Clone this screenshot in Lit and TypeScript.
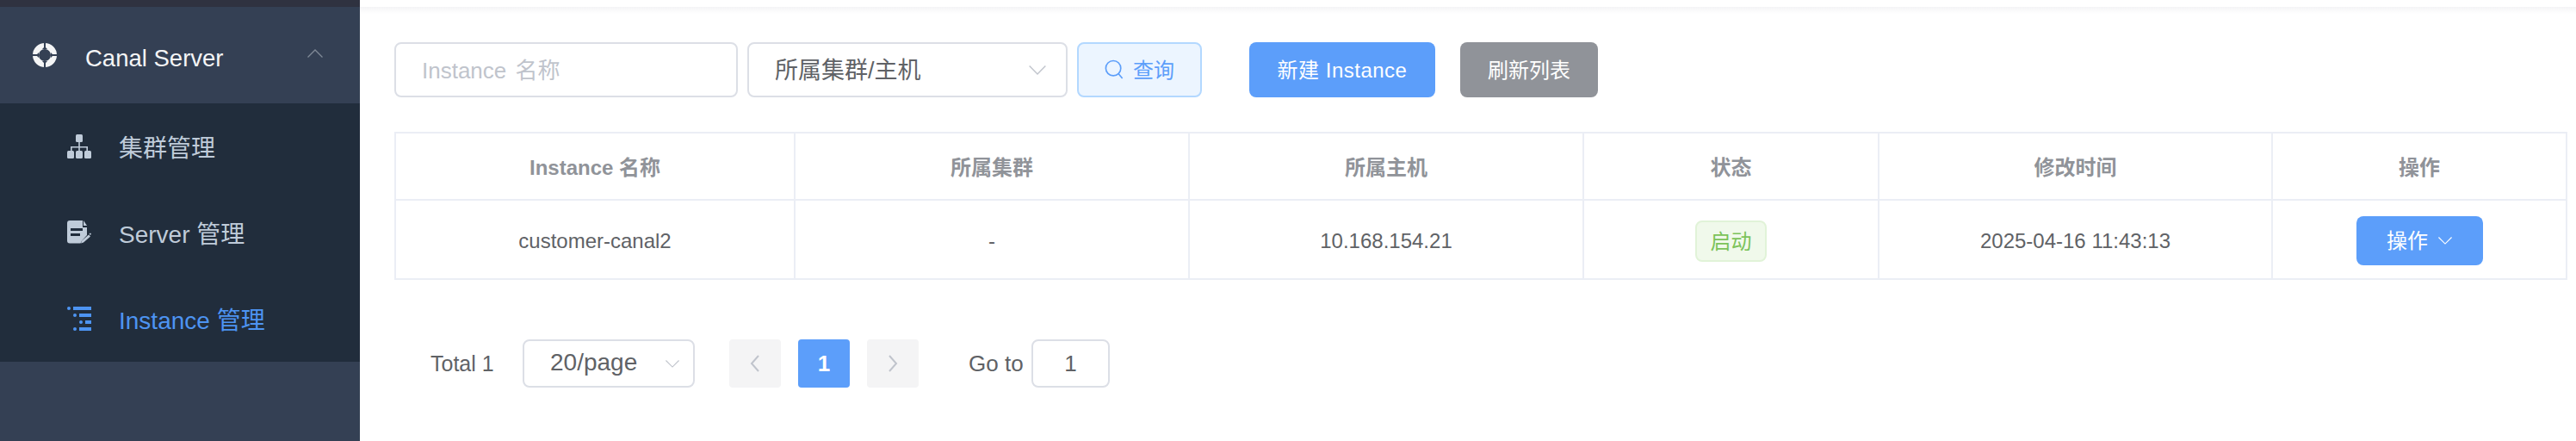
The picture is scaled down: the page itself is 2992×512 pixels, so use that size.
import { LitElement, html, css } from 'lit';
import { customElement } from 'lit/decorators.js';

const chevron = (w: number, h: number, up = false) => html`<svg width=${w} height=${h} viewBox="0 0 18 10" fill="none" stroke="currentColor" stroke-width="1.3"><path d=${up ? 'M.5 9.5 9 1l8.5 8.5' : 'M.5 .5 9 9l8.5-8.5'}/></svg>`;

@customElement('app-root')
export class AppRoot extends LitElement {
  static styles = css`
    :host {
      display: flex;
      width: 2992px;
      height: 512px;
      overflow: hidden;
      background: #fff;
      font-family: "Liberation Sans", "Noto Sans CJK SC", sans-serif;
      color: #606266;
    }
    .side {
      width: 418px;
      flex: none;
      background: #344054;
      display: flex;
      flex-direction: column;
    }
    .topbar { height: 8px; background: #2f3240; }
    .group {
      height: 112px;
      display: flex;
      align-items: center;
      padding: 0 43px 0 38px;
      color: #f4f5f6;
      font-size: 27.5px;
    }
    .group .title { margin-left: 33px; flex: 1; padding-top: 7px; }
    .group .arrow { color: #7f8997; display: flex; margin-top: -5px; }
    .sub { background: #212d3c; }
    .item {
      height: 100px;
      display: flex;
      align-items: center;
      padding-left: 78px;
      gap: 32px;
      font-size: 28px;
      color: #bfcbd9;
    }
    .item.active { color: #4d94f2; }

    .main { flex: 1; min-width: 0; position: relative; padding: 49px 10px 0 40px; }
    .shadow {
      position: absolute;
      left: 0;
      right: 0;
      top: 8px;
      height: 8px;
      background: linear-gradient(#f4f4f6, #fff);
    }
    .toolbar { display: flex; align-items: stretch; height: 64px; }
    .box {
      box-sizing: border-box;
      border: 2px solid #dcdfe6;
      border-radius: 8px;
      background: #fff;
      display: flex;
      align-items: center;
    }
    .input {
      width: 399px;
      padding: 0 0 3px 30px;
      font-size: 26px;
      word-spacing: 3px;
      color: #c0c4cc;
    }
    .select {
      width: 372px;
      margin-left: 11px;
      padding: 0 23px 0 30px;
      justify-content: space-between;
      font-size: 27px;
      color: #606266;
    }
    .select > span:first-child { margin-top: -3px; }
    .select .arrow { color: #c0c4cc; display: flex; }
    .btn {
      box-sizing: border-box;
      border-radius: 8px;
      display: flex;
      align-items: center;
      justify-content: center;
      font-size: 24px;
      padding-bottom: 3px;
    }
    .search {
      width: 145px;
      margin-left: 11px;
      border: 2px solid #b3d8ff;
      background: #ecf5ff;
      color: #5c9efa;
      gap: 11px;
    }
    .search svg { margin-top: 3px; }
    .new { width: 216px; margin-left: 55px; background: #5c9efa; color: #fff; letter-spacing: .5px; }
    .refresh { width: 160px; margin-left: 29px; background: #909399; color: #fff; }

    .table {
      margin-top: 40px;
      width: 2524px;
      display: grid;
      grid-template-columns: 466px 458px 458px 343px 457px 342px;
      grid-template-rows: 80px 92px;
      font-size: 24px;
    }
    .cell {
      display: flex;
      align-items: center;
      justify-content: center;
      box-sizing: border-box;
      border-right: 2px solid #ebeef5;
      border-bottom: 2px solid #ebeef5;
      padding-top: 2px;
    }
    .cell.txt { padding-top: 4px; }
    .cell.first { border-left: 2px solid #ebeef5; }
    .cell.head {
      color: #909399;
      font-weight: 700;
      border-top: 2px solid #ebeef5;
      padding: 0 0 2px;
    }
    .tag {
      box-sizing: border-box;
      width: 83px;
      height: 48px;
      margin-top: 1px;
      padding-bottom: 2px;
      display: flex;
      align-items: center;
      justify-content: center;
      border: 2px solid #e1f3d8;
      border-radius: 8px;
      background: #f0f9eb;
      color: #7cc35a;
    }
    .op {
      width: 147px;
      height: 57px;
      background: #5c9efa;
      color: #fff;
      gap: 12px;
    }
    .op svg { margin-top: 3px; }

    .pager { display: flex; align-items: center; height: 56px; margin-top: 69px; padding-left: 42px; }
    .pager .total { width: 107px; font-size: 25px; }
    .pager .size {
      box-sizing: border-box;
      width: 200px;
      height: 56px;
      padding: 0 16px 0 30px;
      justify-content: space-between;
      font-size: 28px;
    }
    .pager .size > span:first-child { margin-top: -2px; }
    .pager .size .arrow { color: #c0c4cc; display: flex; }
    .pg {
      width: 60px;
      height: 56px;
      border-radius: 4px;
      background: #f4f4f5;
      color: #c0c4cc;
      display: flex;
      align-items: center;
      justify-content: center;
      margin-left: 20px;
    }
    .pg.first { margin-left: 40px; }
    .pg.cur { background: #5c9efa; color: #fff; font-size: 26px; font-weight: 700; }
    .goto { margin-left: 58px; font-size: 26px; width: 73px; }
    .jump { width: 91px; height: 56px; justify-content: center; font-size: 26px; }
  `;

  render() {
    return html`
      <aside class="side">
        <div class="topbar"></div>
        <div class="group">
          <svg width="28" height="28" viewBox="0 0 28 28">
            <path fill="#f4f5f6" fill-rule="evenodd" d="M14 0a14 14 0 1 1 0 28a14 14 0 0 1 0-28ZM14 7a7 7 0 1 0 0 14a7 7 0 0 0 0-14Z"/>
            <path fill="#344054" d="M13 0h2v6h-2zM13 22h2v6h-2zM0 13h6v2H0zM22 13h6v2h-6z"/>
            <path fill="#344054" d="M14 4l3 3h-6zM14 24l-3-3h6zM4 14l3-3v6zM24 14l-3 3v-6z"/>
          </svg>
          <span class="title">Canal Server</span>
          <span class="arrow">${chevron(18, 10, true)}</span>
        </div>
        <div class="sub">
          <div class="item">
            <svg width="28" height="28" viewBox="0 0 28 28" fill="#bfcbd9">
              <rect x="10" y="0" width="8" height="9" rx="1.500"/>
              <path d="M13.200 9h1.600v5H24v6h-1.600v-4.400h-7.600V20h-1.600v-4.400H5.600V20H4v-6h9.200z"/>
              <rect x="0" y="19" width="8" height="9" rx="1.500"/>
              <rect x="10" y="19" width="8" height="9" rx="1.500"/>
              <rect x="20" y="19" width="8" height="9" rx="1.500"/>
            </svg>
            <span>集群管理</span>
          </div>
          <div class="item">
            <svg width="28" height="28" viewBox="0 0 28 28" fill="#bfcbd9">
              <path fill-rule="evenodd" d="M3 0h15v8h5v9l-6 6.500-1.500 3H3a3 3 0 0 1-3-3V3a3 3 0 0 1 3-3ZM4 9v3h14V9ZM4 15v3h11v-3Z"/>
              <path d="M19 0l4 6h-4zM16 26.500l1-3 8-7 2 2-8 7zM25.500 15.500l1.500-1 1 1-1 1.500z"/>
            </svg>
            <span>Server 管理</span>
          </div>
          <div class="item active">
            <svg width="28" height="28" viewBox="0 0 28 28" fill="#4d94f2">
              <circle cx="2" cy="2" r="2"/>
              <rect x="7" y="0" width="21" height="4"/>
              <circle cx="9" cy="10" r="2"/>
              <rect x="14" y="8" width="14" height="4"/>
              <circle cx="16" cy="18" r="2"/>
              <rect x="21" y="16" width="7" height="4"/>
              <circle cx="9" cy="26" r="2"/>
              <rect x="14" y="24" width="14" height="4"/>
            </svg>
            <span>Instance 管理</span>
          </div>
        </div>
      </aside>
      <main class="main">
        <div class="shadow"></div>
        <div class="toolbar">
          <div class="box input">Instance 名称</div>
          <div class="box select">
            <span>所属集群/主机</span>
            <span class="arrow">${chevron(20, 11)}</span>
          </div>
          <div class="btn search">
            <svg width="22" height="24" viewBox="0 0 24 26" fill="none" stroke="currentColor" stroke-width="1.800"><circle cx="11" cy="11" r="9.500"/><path d="M17.500 18l5 6"/></svg>
            <span>查询</span>
          </div>
          <div class="btn new">新建 Instance</div>
          <div class="btn refresh">刷新列表</div>
        </div>
        <div class="table">
          <div class="cell head first">Instance 名称</div>
          <div class="cell head">所属集群</div>
          <div class="cell head">所属主机</div>
          <div class="cell head">状态</div>
          <div class="cell head">修改时间</div>
          <div class="cell head">操作</div>
          <div class="cell txt first">customer-canal2</div>
          <div class="cell txt">-</div>
          <div class="cell txt">10.168.154.21</div>
          <div class="cell"><span class="tag">启动</span></div>
          <div class="cell txt">2025-04-16 11:43:13</div>
          <div class="cell">
            <div class="btn op"><span>操作</span>${chevron(16, 9)}</div>
          </div>
        </div>
        <div class="pager">
          <span class="total">Total 1</span>
          <div class="box size">
            <span>20/page</span>
            <span class="arrow">${chevron(16, 9)}</span>
          </div>
          <div class="pg first">
            <svg width="12" height="20" viewBox="0 0 12 20" fill="none" stroke="currentColor" stroke-width="2"><path d="M10 1 2 10l8 9"/></svg>
          </div>
          <div class="pg cur">1</div>
          <div class="pg">
            <svg width="12" height="20" viewBox="0 0 12 20" fill="none" stroke="currentColor" stroke-width="2"><path d="M2 1l8 9-8 9"/></svg>
          </div>
          <span class="goto">Go to</span>
          <div class="box jump">1</div>
        </div>
      </main>
    `;
  }
}
